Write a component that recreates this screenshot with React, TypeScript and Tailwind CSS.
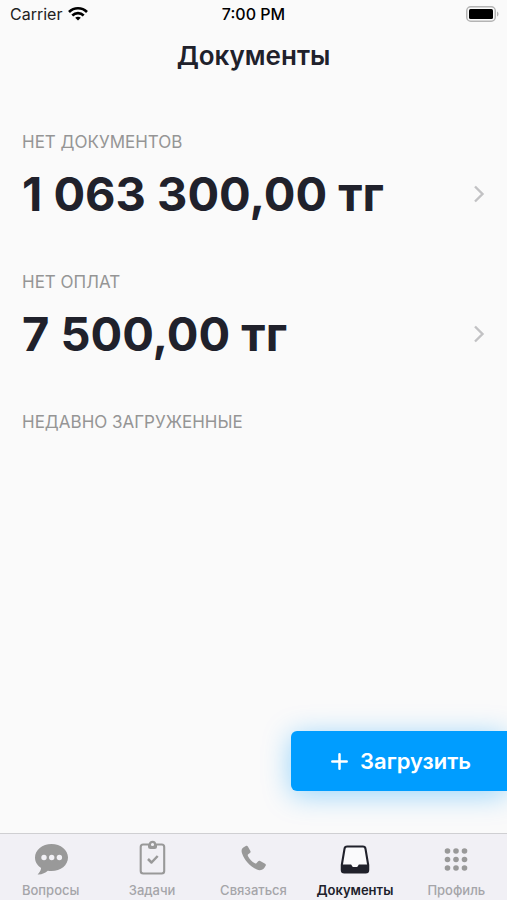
import type { ReactNode } from "react";

function WifiIcon() {
  return (
    <svg className="h-4 w-5" viewBox="0 0 20 16" fill="none" stroke="#000" strokeWidth="2.6" aria-hidden="true">
      <path d="M1 6C6 .9 14 .9 19 6" />
      <path d="M4.3 9.5c3.3-3.2 8.1-3.2 11.4 0" />
      <path d="M10 14.4 7.2 11.8c1.6-1.4 4-1.4 5.6 0Z" fill="#000" stroke="none" />
    </svg>
  );
}

function BatteryIcon() {
  return (
    <svg className="h-4 w-[33px]" viewBox="0 0 33 16" aria-hidden="true">
      <rect x=".75" y=".75" width="28.5" height="14.5" rx="4" fill="#fafafa" stroke="#b4b4b4" strokeWidth="1.5" />
      <rect x="3" y="3" width="24" height="10" rx="1.5" fill="#000" />
      <path d="M31 5.500c2 .7 2 4.300 0 5Z" fill="#b4b4b4" />
    </svg>
  );
}

function ChevronIcon() {
  return (
    <svg className="h-5 w-3" viewBox="0 0 12 20" fill="none" stroke="#c2c2c4" strokeWidth="2.4" aria-hidden="true">
      <path d="m2 2.500 7.500 7.500L2 17.500" />
    </svg>
  );
}

function ChatIcon() {
  return (
    <svg className="size-9" viewBox="0 0 36 36" aria-hidden="true">
      <path d="M18.500 4C9.300 4 2 9.900 2 17.600c0 4.500 2.400 8.100 6.100 10.500-.3 2.900-1.700 4.600-3.500 6.400 4.300.3 7.700-1.600 10.200-3.700 1.200.2 2.400.3 3.700.3 9.200 0 16.500-5.800 16.500-13.500S27.700 4 18.500 4Z" fill="#999" />
      <g fill="#f1f0f5">
        <circle cx="11" cy="17.500" r="2.700" />
        <circle cx="18.700" cy="17.500" r="2.700" />
        <circle cx="26.400" cy="17.500" r="2.700" />
      </g>
    </svg>
  );
}

function ClipboardIcon() {
  return (
    <svg className="size-9" viewBox="0 0 36 36" fill="none" stroke="#999" strokeWidth="2.1" strokeLinejoin="round" aria-hidden="true">
      <rect x="6.700" y="4.500" width="23.500" height="29" rx="2.500" />
      <path d="M14 4h9v2.500a2.500 2.500 0 0 1-2.500 2.500h-4A2.500 2.500 0 0 1 14 6.500Z" fill="#999" stroke="none" />
      <circle cx="18.500" cy="4.500" r="2.700" fill="#f1f0f5" strokeWidth="2.200" />
      <path d="m14 19 3.500 3.500 6.200-6.500" strokeWidth="2.500" />
    </svg>
  );
}

function PhoneIcon() {
  return (
    <svg className="size-9" viewBox="0 0 36 36" fill="#999" aria-hidden="true">
      <path d="M8.700 7.200 10.800 6c.9-.5 1.700-.2 2.200.7l2.400 4.200c.4.800.2 1.500-.5 2l-1.700 1.300c-.6.500-.6 1-.3 1.700 1.600 3 4 5.600 7 7.400.7.400 1.200.3 1.700-.3l1.600-1.700c.6-.7 1.300-.8 2-.4l4.900 2.800c.8.500 1 1.300.5 2.100l-1 1.600c-1.700 2.600-4.700 3.500-7.700 2.200C15 26.200 9.500 20.300 7.100 13.500 6.100 10.700 6.500 8.600 8.700 7.200Z" />
    </svg>
  );
}

function TrayIcon() {
  return (
    <svg className="size-9" viewBox="0 0 36 36" aria-hidden="true">
      <path d="M10.200 6.500h15.600c1.700 0 2.500.8 2.700 2.300L31.200 25v5c0 1.700-.9 2.500-2.500 2.500H7.300c-1.600 0-2.500-.8-2.500-2.500v-5L7.500 8.800c.2-1.500 1-2.300 2.700-2.300Z" fill="#fafafc" stroke="#20212b" strokeWidth="2.1" strokeLinejoin="round" />
      <path d="M4.800 24.500h8.600c.9 0 1.200.5 1.500 1.200.4.900.9 1.300 1.700 1.300h2.800c.8 0 1.300-.4 1.700-1.300.3-.7.600-1.200 1.500-1.200h8.600V30c0 1.700-.9 2.500-2.500 2.500H7.300c-1.600 0-2.500-.8-2.500-2.500Z" fill="#20212b" />
    </svg>
  );
}

function GridIcon() {
  const steps = [9.5, 18, 26.5];
  return (
    <svg className="size-9" viewBox="0 0 36 36" fill="#999" aria-hidden="true">
      {steps.map((y) => steps.map((x) => <circle key={`${x}-${y}`} cx={x} cy={y + 1.5} r="2.8" />))}
    </svg>
  );
}

function Amount({ label, value }: { label: string; value: string }) {
  return (
    <section>
      <h2 className="text-[17px] leading-6 text-[#959595]">{label}</h2>
      <button type="button" className="mt-2 flex w-full items-center justify-between text-left">
        <span className="text-[47px] leading-[64px] font-bold text-[#20212b]">{value}</span>
        <ChevronIcon />
      </button>
    </section>
  );
}

function Tab({ label, icon, active = false }: { label: string; icon: ReactNode; active?: boolean }) {
  return (
    <a
      href="#"
      aria-current={active ? "page" : undefined}
      className={`flex flex-col items-center gap-1 text-[13px] leading-5 ${
        active ? "font-semibold text-[#20212b]" : "font-medium text-[#a5a5a9]"
      }`}
    >
      {icon}
      <span>{label}</span>
    </a>
  );
}

export default function App() {
  return (
    <div className="flex min-h-screen flex-col overflow-x-hidden bg-[#fafafa] font-['Inter','Noto_Sans',sans-serif]">
      <div className="grid grid-cols-3 items-center px-2 text-base leading-7 text-[#222]">
        <div className="flex items-center gap-1.5 pl-0.5">
          <span>Carrier</span>
          <WifiIcon />
        </div>
        <span className="text-center font-medium text-black">7:00 PM</span>
        <div className="flex justify-end">
          <BatteryIcon />
        </div>
      </div>
      <header className="pt-3">
        <h1 className="text-center text-[26px] leading-8 font-semibold text-[#20212b]">Документы</h1>
      </header>
      <main className="flex flex-1 flex-col pt-[58px]">
        <div className="flex flex-col gap-11 px-[22px]">
          <Amount label="НЕТ ДОКУМЕНТОВ" value="1 063 300,00 тг" />
          <Amount label="НЕТ ОПЛАТ" value="7 500,00 тг" />
          <h2 className="text-[17px] leading-6 text-[#959595]">НЕДАВНО ЗАГРУЖЕННЫЕ</h2>
        </div>
        <button
          type="button"
          className="mt-auto mb-[42px] flex h-[60px] w-[216px] items-center gap-3 self-end rounded-l-md bg-[#009dff] pl-10 text-[22px] font-semibold text-white shadow-[0_4px_28px_rgba(0,157,255,0.4)]"
        >
          <svg className="size-[17px]" viewBox="0 0 17 17" fill="none" stroke="currentColor" strokeWidth="2.500" strokeLinecap="round" aria-hidden="true">
            <path d="M8.500 1.300v14.400M1.300 8.500h14.400" />
          </svg>
          Загрузить
        </button>
      </main>
      <nav className="grid grid-cols-5 border-t border-[#cfcfd2] bg-[#f1f0f5] pt-1.5">
        <Tab label="Вопросы" icon={<ChatIcon />} />
        <Tab label="Задачи" icon={<ClipboardIcon />} />
        <Tab label="Связаться" icon={<PhoneIcon />} />
        <Tab label="Документы" icon={<TrayIcon />} active />
        <Tab label="Профиль" icon={<GridIcon />} />
      </nav>
    </div>
  );
}
